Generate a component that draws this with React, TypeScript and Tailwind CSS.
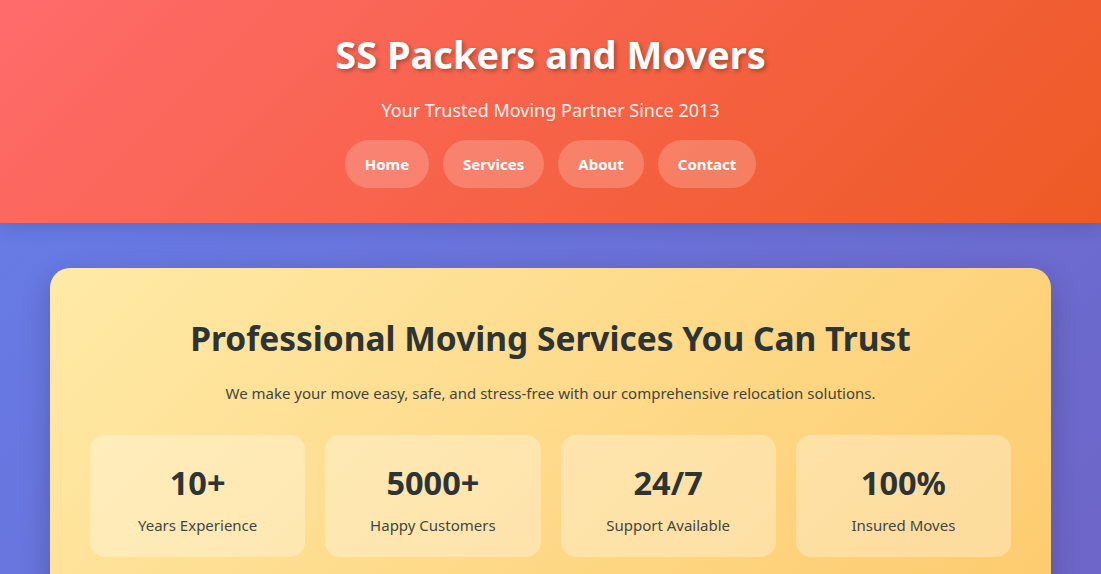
import React from "react";

const stats = [
  { n: "10+", l: "Years Experience" },
  { n: "5000+", l: "Happy Customers" },
  { n: "24/7", l: "Support Available" },
  { n: "100%", l: "Insured Moves" },
];

export default function App() {
  return (
    <div
      className="min-h-[2400px] bg-[linear-gradient(135deg,#667eea_0%,#764ba2_100%)] text-[#2d3436]"
      style={{ fontFamily: '"Noto Sans", "Open Sans", sans-serif' }}
    >
      <header className="relative z-10 bg-[linear-gradient(135deg,#ff6b6b,#ee5a24)] pt-[32px] pb-[35px] text-center text-white shadow-[0_2px_20px_rgba(0,0,0,0.15)]">
        <h1 className="text-[38px] font-bold leading-[1.2] [text-shadow:2px_2px_4px_rgba(0,0,0,0.3)]">
          SS Packers and Movers
        </h1>
        <p className="mt-[20px] text-[18px] leading-[1.4] opacity-90">Your Trusted Moving Partner Since 2013</p>
        <nav className="mt-[17px] flex justify-center gap-[14px]">
          {["Home", "Services", "About", "Contact"].map((t) => (
            <a
              key={t}
              className="rounded-full bg-white/20 px-[20px] py-[12px] text-[15px] font-bold leading-[24px] text-white"
            >
              {t}
            </a>
          ))}
        </nav>
      </header>
      <main className="px-[50px] pt-[45px]">
        <section className="rounded-[20px] bg-[linear-gradient(135deg,#ffeaa7,#fdcb6e)] px-[40px] pt-[50px] pb-[40px] text-center shadow-[0_10px_30px_rgba(0,0,0,0.2)]">
          <h2 className="text-[33.5px] font-bold leading-[1.2]">Professional Moving Services You Can Trust</h2>
          <p className="mt-[24px] text-[15px] leading-[1.5] opacity-90">
            We make your move easy, safe, and stress-free with our comprehensive relocation solutions.
          </p>
          <div className="mt-[31px] grid grid-cols-4 gap-[20px]">
            {stats.map((s) => (
              <div key={s.n} className="rounded-[15px] bg-white/30 pt-[28px] pb-[20px]">
                <div className="text-[32.5px] font-bold leading-[1.2]">{s.n}</div>
                <div className="mt-[12px] text-[15px] leading-[1.5] opacity-90">{s.l}</div>
              </div>
            ))}
          </div>
        </section>
      </main>
    </div>
  );
}
